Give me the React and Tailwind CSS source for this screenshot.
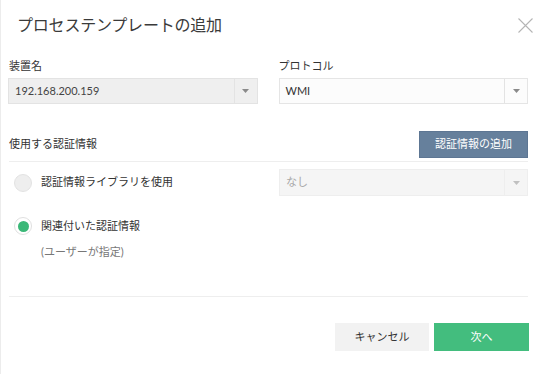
import React from "react";

const font = { fontFamily: "Lato, 'Noto Sans CJK JP', sans-serif" };

function Arrow({ color = "#8a8a8a" }) {
  return (
    <svg width="7" height="4" viewBox="0 0 7 4">
      <path d="M0 0 L7 0 L3.5 4 Z" fill={color} />
    </svg>
  );
}

function Select({ value, variant }) {
  const base =
    variant === "gray"
      ? "bg-[#efefef] border-[#e3e3e3] text-[#444]"
      : variant === "disabled"
      ? "bg-[#f5f5f5] border-[#eeeeee] text-[#a8a8a8]"
      : "bg-[#fcfcfc] border-[#e5e5e5] text-[#333]";
  const h = variant === "disabled" ? "h-[27px]" : "h-[26px]";
  return (
    <div className={`flex items-stretch border ${base} ${h}`}>
      <div className="flex-1 flex items-center pl-[6px] text-[11px]">{value}</div>
      <div className={`w-[23px] flex items-center justify-center border-l ${variant === "disabled" ? "border-[#eeeeee]" : "border-[#e3e3e3]"}`}>
        <Arrow color={variant === "disabled" ? "#c0c0c0" : "#8a8a8a"} />
      </div>
    </div>
  );
}

export default function App() {
  return (
    <div className="w-[543px] h-[374px] bg-white border-l border-[#ececec] flex flex-col" style={font}>
      <div className="h-[50px] flex items-center justify-between pl-[16px] pr-[10px]">
        <div className="text-[16px] text-[#3a3a3a] tracking-[-0.2px]">プロセステンプレートの追加</div>
        <svg width="15" height="15" viewBox="0 0 15 15">
          <path d="M0.5 0.5 L14.5 14.5 M14.5 0.5 L0.5 14.5" stroke="#b5b5b5" strokeWidth="1.1" fill="none" />
        </svg>
      </div>

      <div className="px-[7px] pr-[15px] mt-[8px] grid grid-cols-2 gap-x-[21px]">
        <div className="flex flex-col">
          <div className="h-[16px] leading-[16px] text-[11px] text-[#333] pl-[1px]">装置名</div>
          <div className="mt-[4px]">
            <Select value="192.168.200.159" variant="gray" />
          </div>
        </div>
        <div className="flex flex-col">
          <div className="h-[16px] leading-[16px] text-[11px] text-[#333]">プロトコル</div>
          <div className="mt-[4px]">
            <Select value="WMI" variant="white" />
          </div>
        </div>
      </div>

      <div className="mt-[27px] pl-[8px] pr-[15px] flex items-center justify-between h-[27px]">
        <div className="text-[11px] text-[#333]">使用する認証情報</div>
        <div className="h-[27px] w-[109px] bg-[#66809c] border border-[#5d7693] flex items-center justify-center text-[11px] text-white">
          認証情報の追加
        </div>
      </div>
      <div className="mt-[3px] ml-[8px] mr-[15px] border-t border-[#eeeeee]" />

      <div className="mt-[7px] pl-[8px] pr-[15px] grid grid-cols-2 gap-x-[21px]">
        <div className="flex items-center h-[27px]">
          <div className="w-[18px] h-[18px] rounded-full bg-[#eeeeee] border border-[#e3e3e3] ml-[5px]" />
          <div className="ml-[9px] text-[11px] text-[#333]">認証情報ライブラリを使用</div>
        </div>
        <Select value="なし" variant="disabled" />
      </div>

      <div className="mt-[21px] pl-[8px] flex items-center h-[18px]">
        <div className="w-[18px] h-[18px] rounded-full bg-white border border-[#e0e0e0] ml-[5px] flex items-center justify-center">
          <div className="w-[11px] h-[11px] rounded-full bg-[#3bb878]" />
        </div>
        <div className="ml-[9px] text-[11px] text-[#333]">関連付いた認証情報</div>
      </div>
      <div className="mt-[9px] pl-[40px] h-[16px] leading-[16px] text-[11px] text-[#777]">(ユーザーが指定)</div>

      <div className="mt-[36px] ml-[8px] mr-[15px] border-t border-[#eeeeee]" />

      <div className="mt-[26px] pr-[14px] flex justify-end gap-[5px]">
        <div className="w-[94px] h-[28px] bg-[#f2f2f2] flex items-center justify-center text-[11px] text-[#333]">キャンセル</div>
        <div className="w-[95px] h-[28px] bg-[#43bd7e] flex items-center justify-center text-[11px] text-white">次へ</div>
      </div>
    </div>
  );
}
